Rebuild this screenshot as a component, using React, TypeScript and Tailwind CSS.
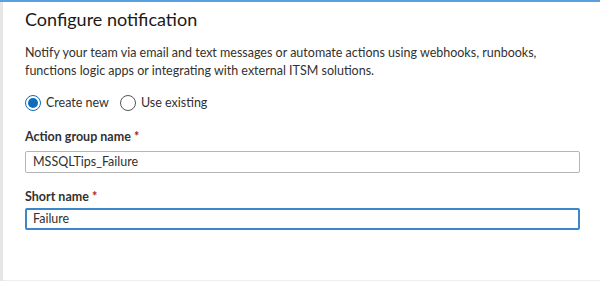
import React from "react";

function Radio({ checked, label }: { checked: boolean; label: string }) {
  return (
    <label className="flex items-center gap-[5px]">
      <span
        className={
          checked
            ? "flex h-[16px] w-[16px] items-center justify-center rounded-full border border-[#0f6cbd]"
            : "flex h-[16px] w-[16px] items-center justify-center rounded-full border border-[#555]"
        }
      >
        {checked && <span className="h-[10px] w-[10px] rounded-full bg-[#0f6cbd]" />}
      </span>
      <span>{label}</span>
    </label>
  );
}

export default function App() {
  return (
    <div
      className="flex h-[281px] w-[600px] flex-col overflow-hidden bg-white text-[#323130]"
      style={{ fontFamily: 'Lato, "Open Sans", sans-serif' }}
    >
      <div className="h-[2px] bg-[#5a9fe0]" />
      <div className="flex flex-1">
        <div className="w-[3px] bg-[#e6e6e6]" />
        <div className="flex flex-1 flex-col border-b border-[#eeeeee] pl-[22px] pr-[20px]">
          <h1 className="mt-[5px] text-[18px] leading-[24px] text-[#1b1a19]">Configure notification</h1>
          <p className="mt-[13px] text-[12.5px] leading-[18px]">
            Notify your team via email and text messages or automate actions using webhooks, runbooks,
            <br />
            functions logic apps or integrating with external ITSM solutions.
          </p>
          <div className="mt-[14px] flex gap-[11px] text-[12.5px] leading-[18px]">
            <Radio checked label="Create new" />
            <Radio checked={false} label="Use existing" />
          </div>
          <div className="mt-[16px] text-[12.5px] font-bold leading-[18px]">
            Action group name <span className="text-[#a4262c]">*</span>
          </div>
          <div className="mt-[5px] flex h-[22px] items-center rounded-[2px] border border-[#b5b5b5] px-[7px] text-[12.5px]">
            MSSQLTips_Failure
          </div>
          <div className="mt-[15px] text-[12.5px] font-bold leading-[18px]">
            Short name <span className="text-[#a4262c]">*</span>
          </div>
          <div className="mt-[2px] flex h-[22px] items-center rounded-[2px] border-2 border-[#3c87c9] px-[6px] text-[12.5px]">
            Failure
          </div>
        </div>
      </div>
    </div>
  );
}
